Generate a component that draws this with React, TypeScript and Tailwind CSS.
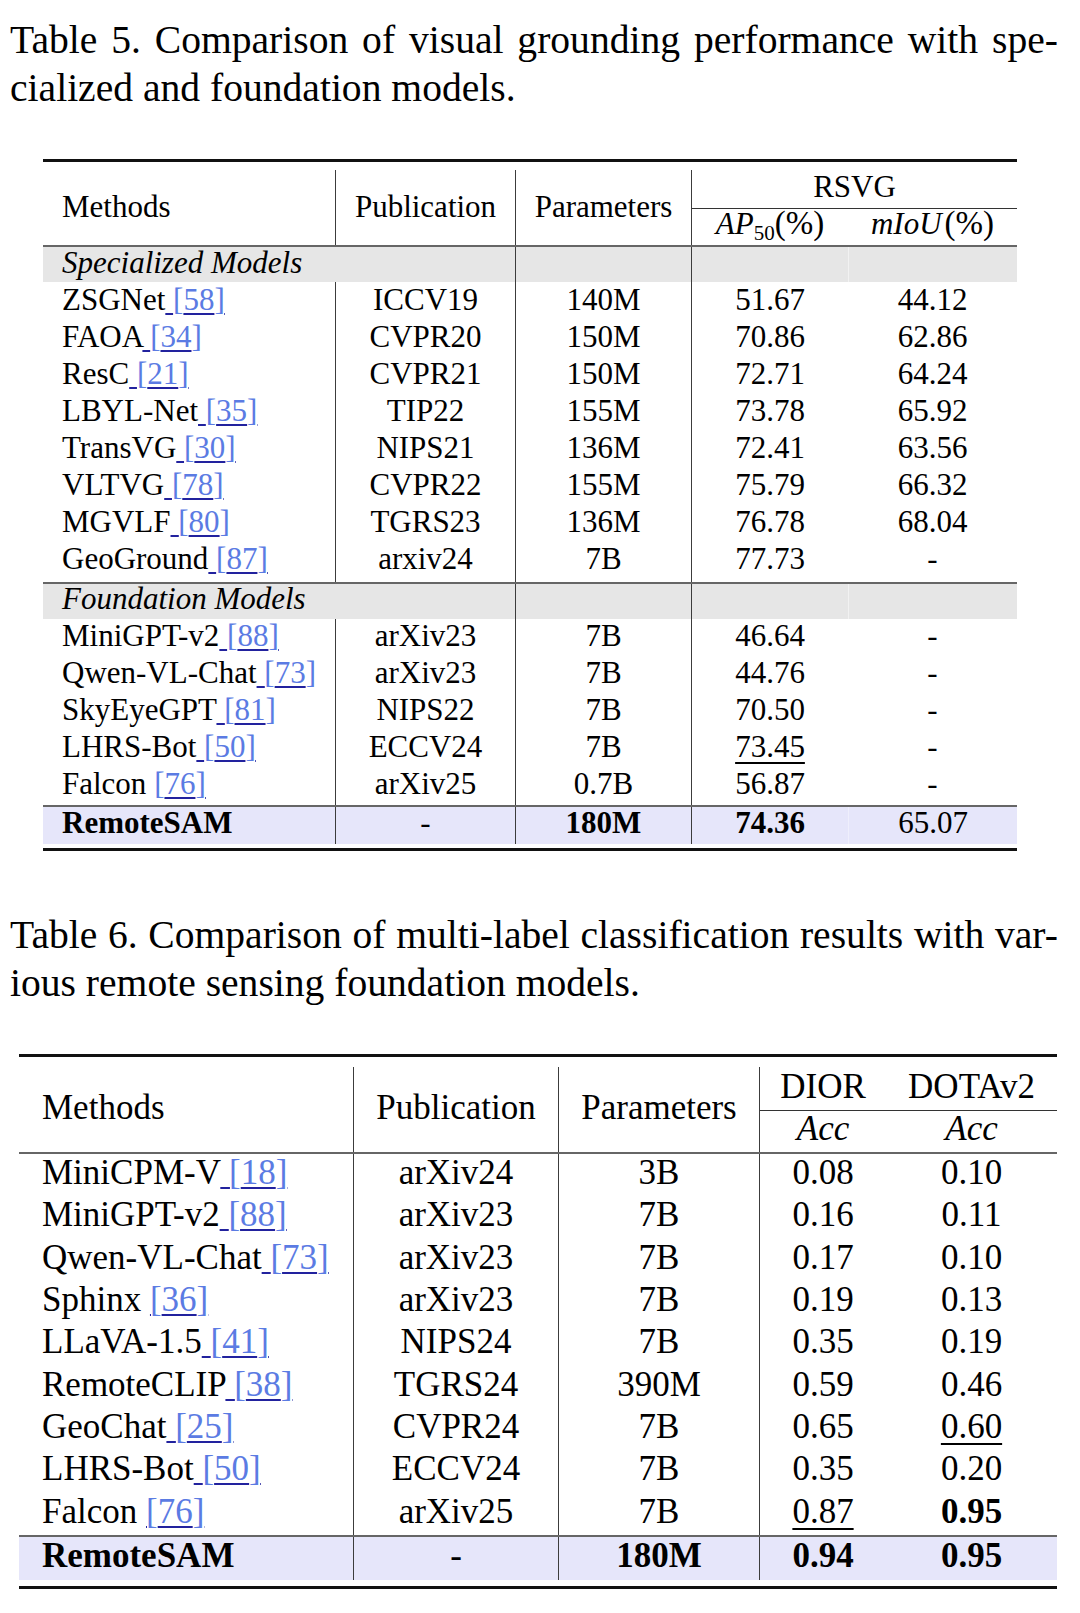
import React from "react";
import clsx from "clsx";

type Val = { t: string; b?: boolean; u?: boolean };

interface Entry {
  name: string;
  cite: string;
  gap?: boolean; // link box starts at the bracket, not at the space
  pub: string;
  params: string;
  x: Val;
  y: Val;
}

const v = (t: string, b = false, u = false): Val => ({ t, b, u });

const specialized: Entry[] = [
  { name: "ZSGNet", cite: "58", pub: "ICCV19", params: "140M", x: v("51.67"), y: v("44.12") },
  { name: "FAOA", cite: "34", pub: "CVPR20", params: "150M", x: v("70.86"), y: v("62.86") },
  { name: "ResC", cite: "21", pub: "CVPR21", params: "150M", x: v("72.71"), y: v("64.24") },
  { name: "LBYL-Net", cite: "35", pub: "TIP22", params: "155M", x: v("73.78"), y: v("65.92") },
  { name: "TransVG", cite: "30", pub: "NIPS21", params: "136M", x: v("72.41"), y: v("63.56") },
  { name: "VLTVG", cite: "78", pub: "CVPR22", params: "155M", x: v("75.79"), y: v("66.32") },
  { name: "MGVLF", cite: "80", pub: "TGRS23", params: "136M", x: v("76.78"), y: v("68.04") },
  { name: "GeoGround", cite: "87", pub: "arxiv24", params: "7B", x: v("77.73"), y: v("-") },
];

const foundation: Entry[] = [
  { name: "MiniGPT-v2", cite: "88", pub: "arXiv23", params: "7B", x: v("46.64"), y: v("-") },
  { name: "Qwen-VL-Chat", cite: "73", pub: "arXiv23", params: "7B", x: v("44.76"), y: v("-") },
  { name: "SkyEyeGPT", cite: "81", pub: "NIPS22", params: "7B", x: v("70.50"), y: v("-") },
  { name: "LHRS-Bot", cite: "50", pub: "ECCV24", params: "7B", x: v("73.45", false, true), y: v("-") },
  { name: "Falcon", cite: "76", gap: true, pub: "arXiv25", params: "0.7B", x: v("56.87"), y: v("-") },
];

const multiLabel: Entry[] = [
  { name: "MiniCPM-V", cite: "18", pub: "arXiv24", params: "3B", x: v("0.08"), y: v("0.10") },
  { name: "MiniGPT-v2", cite: "88", pub: "arXiv23", params: "7B", x: v("0.16"), y: v("0.11") },
  { name: "Qwen-VL-Chat", cite: "73", pub: "arXiv23", params: "7B", x: v("0.17"), y: v("0.10") },
  { name: "Sphinx", cite: "36", gap: true, pub: "arXiv23", params: "7B", x: v("0.19"), y: v("0.13") },
  { name: "LLaVA-1.5", cite: "41", pub: "NIPS24", params: "7B", x: v("0.35"), y: v("0.19") },
  { name: "RemoteCLIP", cite: "38", pub: "TGRS24", params: "390M", x: v("0.59"), y: v("0.46") },
  { name: "GeoChat", cite: "25", pub: "CVPR24", params: "7B", x: v("0.65"), y: v("0.60", false, true) },
  { name: "LHRS-Bot", cite: "50", pub: "ECCV24", params: "7B", x: v("0.35"), y: v("0.20") },
  { name: "Falcon", cite: "76", gap: true, pub: "arXiv25", params: "7B", x: v("0.87", false, true), y: v("0.95", true) },
];

const cols5 = "grid grid-cols-[292px_180px_176px_157px_169px]";
const cols6 = "grid grid-cols-[334px_205px_201px_127px_171px]";
const vline = "border-l border-[#3c3c3c]";

function Num({ val }: { val: Val }) {
  return (
    <span
      className={clsx(
        val.b && "font-bold",
        val.u && "underline decoration-[1.5px] underline-offset-[5px]"
      )}
    >
      {val.t}
    </span>
  );
}

function Method({ e }: { e: Entry }) {
  return (
    <>
      {e.name}
      {e.gap && " "}
      <span className="underline decoration-[#22229e] decoration-2 underline-offset-[3px]">
        {!e.gap && " "}
        <span className="text-[#5b7be3]">[{e.cite}]</span>
      </span>
    </>
  );
}

function Row({ e, cols, pad, cls }: { e: Entry; cols: string; pad: string; cls: string }) {
  return (
    <div className={`${cols} ${cls}`}>
      <div className={`${pad} whitespace-nowrap`}>
        <Method e={e} />
      </div>
      <div className={`${vline} text-center`}>{e.pub}</div>
      <div className={`${vline} text-center`}>{e.params}</div>
      <div className={`${vline} text-center`}>
        <Num val={e.x} />
      </div>
      <div className="text-center">
        <Num val={e.y} />
      </div>
    </div>
  );
}

function Caption({ first, second }: { first: string; second: string }) {
  return (
    <div className="pl-[10px] w-[1058px] text-[39.6px] leading-[48px]">
      <div className="flex justify-between">
        {first.split(" ").map((w, i) => (
          <span key={i}>{w}</span>
        ))}
      </div>
      <div>{second}</div>
    </div>
  );
}

export default function App() {
  return (
    <div className="w-[1080px] min-h-[1613px] bg-white text-black font-['Liberation_Serif','Times_New_Roman',serif] pt-[16px]">
      <Caption
        first="Table 5. Comparison of visual grounding performance with spe-"
        second="cialized and foundation models."
      />

      {/* Table 5 */}
      <div className="ml-[43px] w-[974px] mt-[47px] text-[31px]">
        <div className="border-t-[3px] border-[#111] pt-[8px]">
          <div className={`${cols5} h-[77px] border-b-2 border-[#666]`}>
            <div className="flex items-center pl-[19px] pb-[2px] leading-[34px]">Methods</div>
            <div className={`${vline} flex items-center justify-center pb-[2px] leading-[34px]`}>Publication</div>
            <div className={`${vline} flex items-center justify-center pb-[2px] leading-[34px]`}>Parameters</div>
            <div className={`${vline} col-span-2`}>
              <div className="h-[39px] border-b border-[#333] text-center leading-[34px]">RSVG</div>
              <div className="grid grid-cols-[156px_169px] leading-[29px]">
                <div className="text-center">
                  <span className="italic">AP</span>
                  <span className="relative top-[6px] text-[21px]">50</span>
                  <span className="text-[33px]">(%)</span>
                </div>
                <div className="text-center">
                  <span className="italic">mIoU</span>
                  <span className="ml-[3px] text-[33px]">(%)</span>
                </div>
              </div>
            </div>
          </div>
        </div>

        <div className={`${cols5} h-[35px] leading-[32px] bg-[#e6e6e6]`}>
          <div className="col-span-2 pl-[19px] italic">Specialized Models</div>
          <div className={vline}></div>
          <div className={vline}></div>
          <div className="border-l border-[#f2f2f2]"></div>
        </div>
        {specialized.map((e, i) => (
          <Row
            key={e.name}
            e={e}
            cols={cols5}
            pad="pl-[19px]"
            cls={i === specialized.length - 1 ? "h-[41px] leading-[36px]" : "h-[37px] leading-[36px]"}
          />
        ))}

        <div className={`${cols5} h-[37px] border-t-2 border-[#666] leading-[30px] bg-[#e6e6e6]`}>
          <div className="col-span-2 pl-[19px] italic">Foundation Models</div>
          <div className={vline}></div>
          <div className={vline}></div>
          <div className="border-l border-[#f2f2f2]"></div>
        </div>
        {foundation.map((e, i) => (
          <Row
            key={e.name}
            e={e}
            cols={cols5}
            pad="pl-[19px]"
            cls={i === foundation.length - 1 ? "h-[38px] leading-[33px]" : "h-[37px] leading-[33px]"}
          />
        ))}

        <div className={`${cols5} h-[39px] border-t-2 border-[#666] leading-[32px] bg-[#e6e6fa]`}>
          <div className="pl-[19px] font-bold">RemoteSAM</div>
          <div className={`${vline} text-center`}>-</div>
          <div className={`${vline} text-center font-bold`}>180M</div>
          <div className={`${vline} text-center font-bold`}>74.36</div>
          <div className="border-l border-[#efeffc] text-center">65.07</div>
        </div>
        <div className="mt-[4px] border-t-[3px] border-[#111]"></div>
      </div>

      <div className="mt-[60px]">
        <Caption
          first="Table 6. Comparison of multi-label classification results with var-"
          second="ious remote sensing foundation models."
        />
      </div>

      {/* Table 6 */}
      <div className="ml-[19px] w-[1038px] mt-[47px] text-[35px]">
        <div className="border-t-[3px] border-[#111] pt-[10px]">
          <div className={`${cols6} h-[87px] border-b-2 border-[#666]`}>
            <div className="flex items-center pl-[23px] pb-[4px] leading-[35px]">Methods</div>
            <div className={`${vline} flex items-center justify-center pb-[4px] leading-[35px]`}>Publication</div>
            <div className={`${vline} flex items-center justify-center pb-[4px] leading-[35px]`}>Parameters</div>
            <div className={`${vline} col-span-2`}>
              <div className="grid grid-cols-[126px_171px] h-[44px] border-b border-[#333] leading-[40px]">
                <div className="text-center">DIOR</div>
                <div className="text-center">DOTAv2</div>
              </div>
              <div className="grid grid-cols-[126px_171px] leading-[35px] italic">
                <div className="text-center">Acc</div>
                <div className="text-center">Acc</div>
              </div>
            </div>
          </div>
        </div>

        {multiLabel.map((e) => (
          <Row key={e.name} e={e} cols={cols6} pad="pl-[23px]" cls="h-[42.33px] leading-[37px]" />
        ))}

        <div className={`${cols6} h-[45px] border-t-2 border-[#666] leading-[38px] bg-[#e6e6fa]`}>
          <div className="pl-[23px] font-bold">RemoteSAM</div>
          <div className={`${vline} text-center`}>-</div>
          <div className={`${vline} text-center font-bold`}>180M</div>
          <div className={`${vline} text-center font-bold`}>0.94</div>
          <div className="text-center font-bold">0.95</div>
        </div>
        <div className="mt-[6px] border-t-[3px] border-[#111]"></div>
      </div>
    </div>
  );
}
